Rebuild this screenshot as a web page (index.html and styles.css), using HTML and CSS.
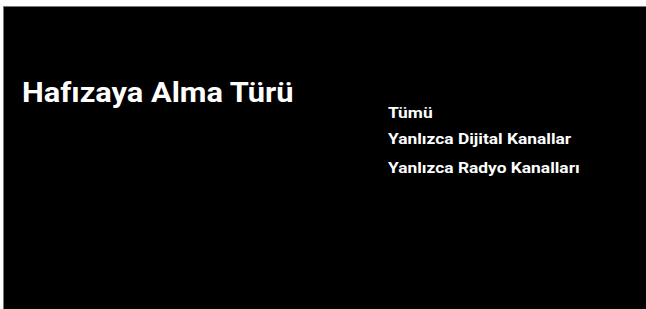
FILE: index.html
```html
<!DOCTYPE html>
<html lang="tr">
<head>
<meta charset="utf-8">
<link rel="stylesheet" href="styles.css">
</head>
<body>
<div class="screen">
  <h1 class="title">Hafızaya Alma Türü</h1>
  <ul class="options">
    <li class="option first">Tümü</li>
    <li class="option">Yanlızca Dijital Kanallar</li>
    <li class="option">Yanlızca Radyo Kanalları</li>
  </ul>
</div>
</body>
</html>
```
FILE: styles.css
```css
html, body {
  margin: 0;
  padding: 0;
  background: #ffffff;
  width: 646px;
  height: 309px;
  overflow: hidden;
}
body {
  padding: 6px 0 0 3px;
  box-sizing: border-box;
}
.screen {
  box-sizing: border-box;
  height: 303px;
  background: #000000;
  border-top: 1px solid #777777;
  border-left: 1px solid #777777;
  display: flex;
  align-items: flex-start;
  padding: 69px 0 0 18px;
  font-family: Roboto, "Liberation Sans", sans-serif;
  color: #ffffff;
}
.title {
  margin: 0;
  font-size: 28px;
  font-weight: 700;
  line-height: 33px;
  width: 366px;
  flex: none;
  white-space: nowrap;
  transform: scaleX(1.1);
  transform-origin: left center;
}
.options {
  list-style: none;
  margin: 0;
  padding: 29px 0 0 0;
  font-size: 14px;
  font-weight: 700;
  line-height: 16px;
  white-space: nowrap;
  transform: scaleX(1.24);
  transform-origin: left center;
}
.option {
  margin-top: 10px;
}
.option.first {
  margin-top: 0;
}
.option:last-child {
  margin-top: 13px;
}
```
